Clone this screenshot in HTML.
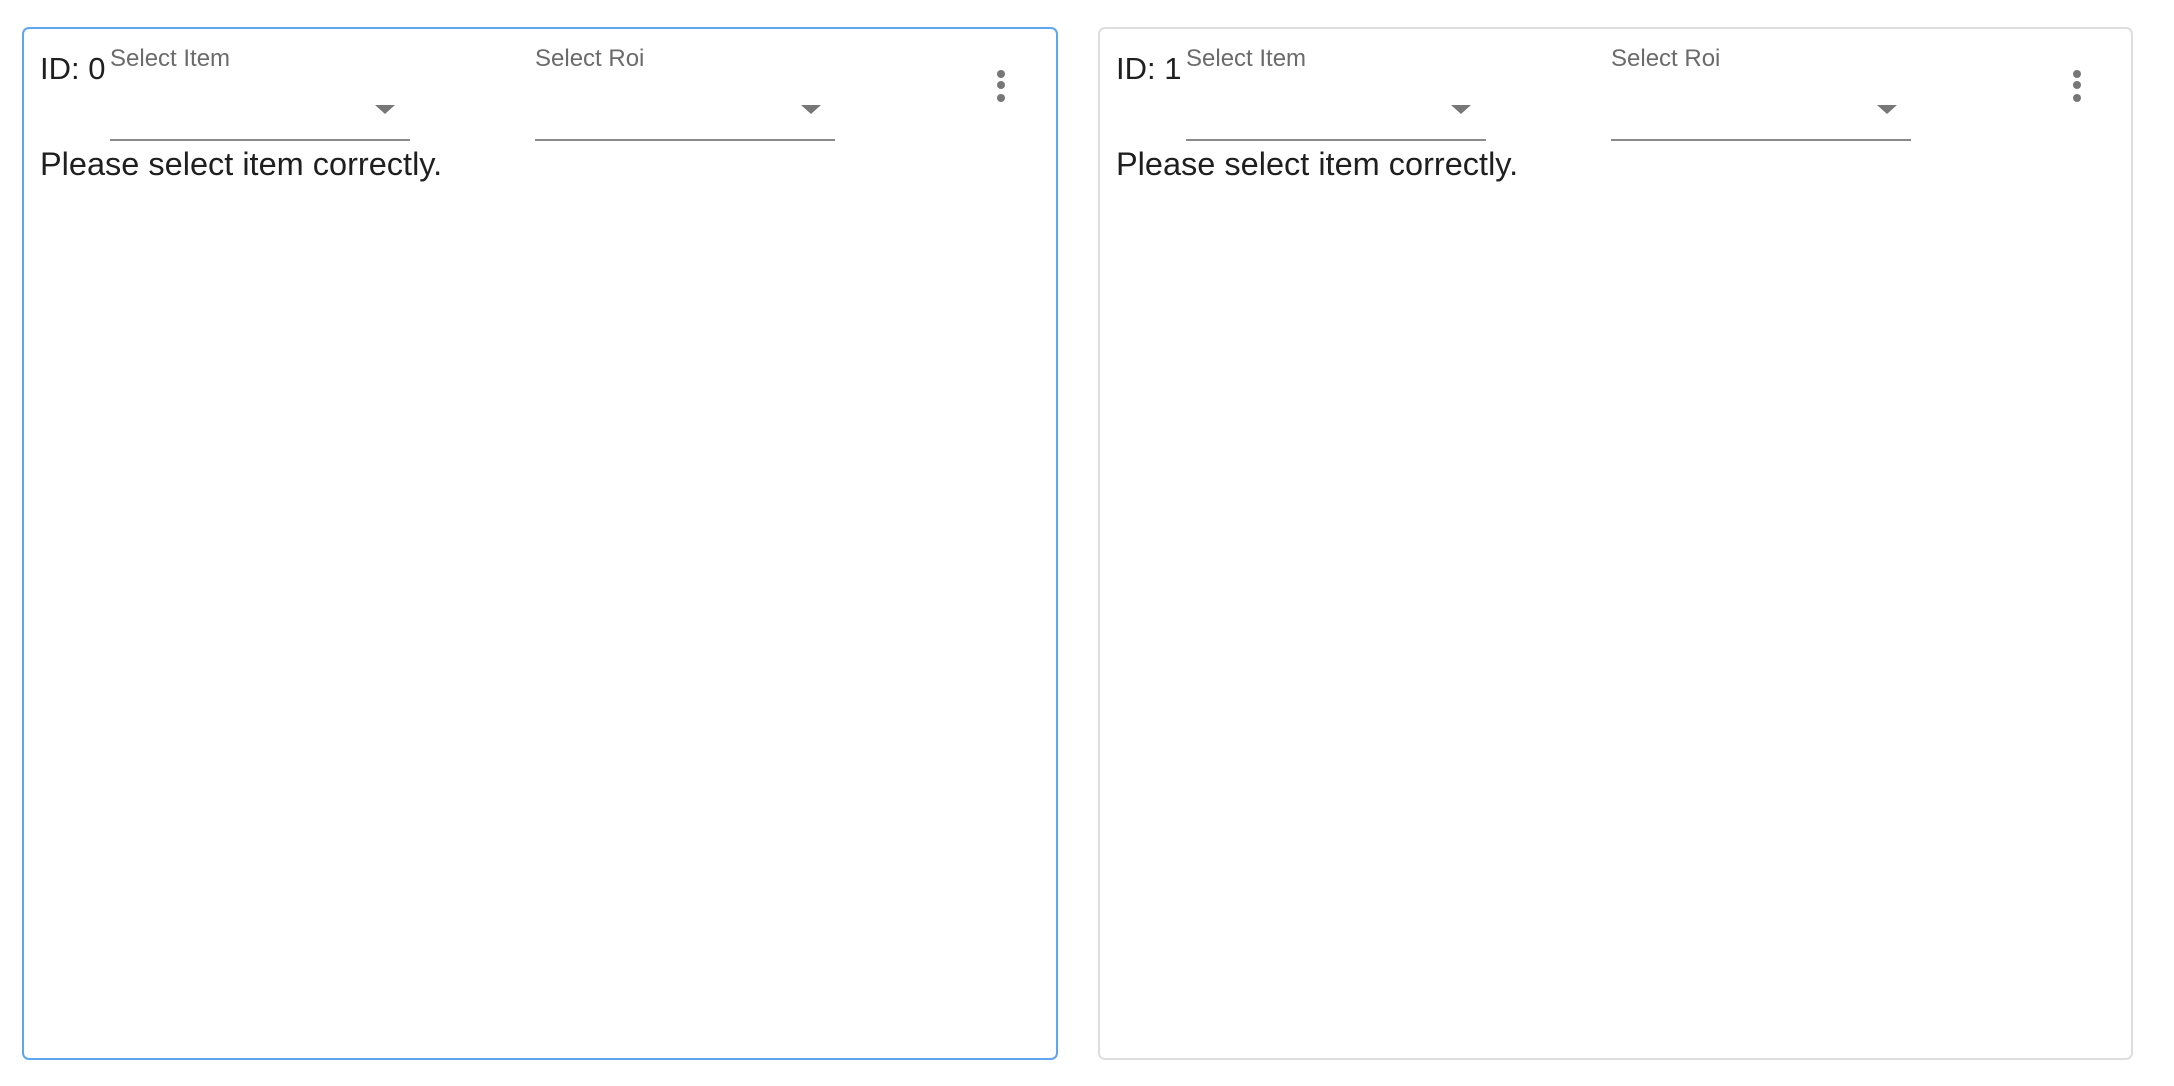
<!DOCTYPE html>
<html><head><meta charset="utf-8"><style>
html,body{margin:0;padding:0;background:#fff;width:2174px;height:1086px;overflow:hidden;font-family:"Liberation Sans",Arial,sans-serif;}
.card{position:absolute;top:27px;height:1033px;box-sizing:border-box;border-radius:7px;}
.c0{left:22px;width:1036px;border:2px solid #5ea6ee;}
.c1{left:1098px;width:1035px;border:2px solid #dedede;}
.t{position:absolute;white-space:nowrap;}
.id{font-size:31px;color:#1f1f1f;top:22px;}
.lbl{font-size:24px;color:#6b6b6b;top:16px;}
.line{position:absolute;height:2px;background:#8a8a8a;top:110px;width:300px;}
.arr{position:absolute;top:76px;width:0;height:0;border-left:10px solid transparent;border-right:10px solid transparent;border-top:9px solid #777;}
.msg{font-size:32.5px;color:#1f1f1f;top:117px;}
.dot{position:absolute;width:8px;height:8px;border-radius:50%;background:#777;}
</style></head><body>
<div class="card c0">
  <div class="t id" style="left:16px">ID: 0</div>
  <div class="t lbl" style="left:86px">Select Item</div>
  <div class="arr" style="left:351px"></div>
  <div class="line" style="left:86px"></div>
  <div class="t lbl" style="left:511px">Select Roi</div>
  <div class="arr" style="left:777px"></div>
  <div class="line" style="left:511px"></div>
  <div class="dot" style="left:973px;top:41px"></div>
  <div class="dot" style="left:973px;top:52px"></div>
  <div class="dot" style="left:973px;top:65px"></div>
  <div class="t msg" style="left:16px">Please select item correctly.</div>
</div>
<div class="card c1">
  <div class="t id" style="left:16px">ID: 1</div>
  <div class="t lbl" style="left:86px">Select Item</div>
  <div class="arr" style="left:351px"></div>
  <div class="line" style="left:86px"></div>
  <div class="t lbl" style="left:511px">Select Roi</div>
  <div class="arr" style="left:777px"></div>
  <div class="line" style="left:511px"></div>
  <div class="dot" style="left:973px;top:41px"></div>
  <div class="dot" style="left:973px;top:52px"></div>
  <div class="dot" style="left:973px;top:65px"></div>
  <div class="t msg" style="left:16px">Please select item correctly.</div>
</div>
</body></html>
